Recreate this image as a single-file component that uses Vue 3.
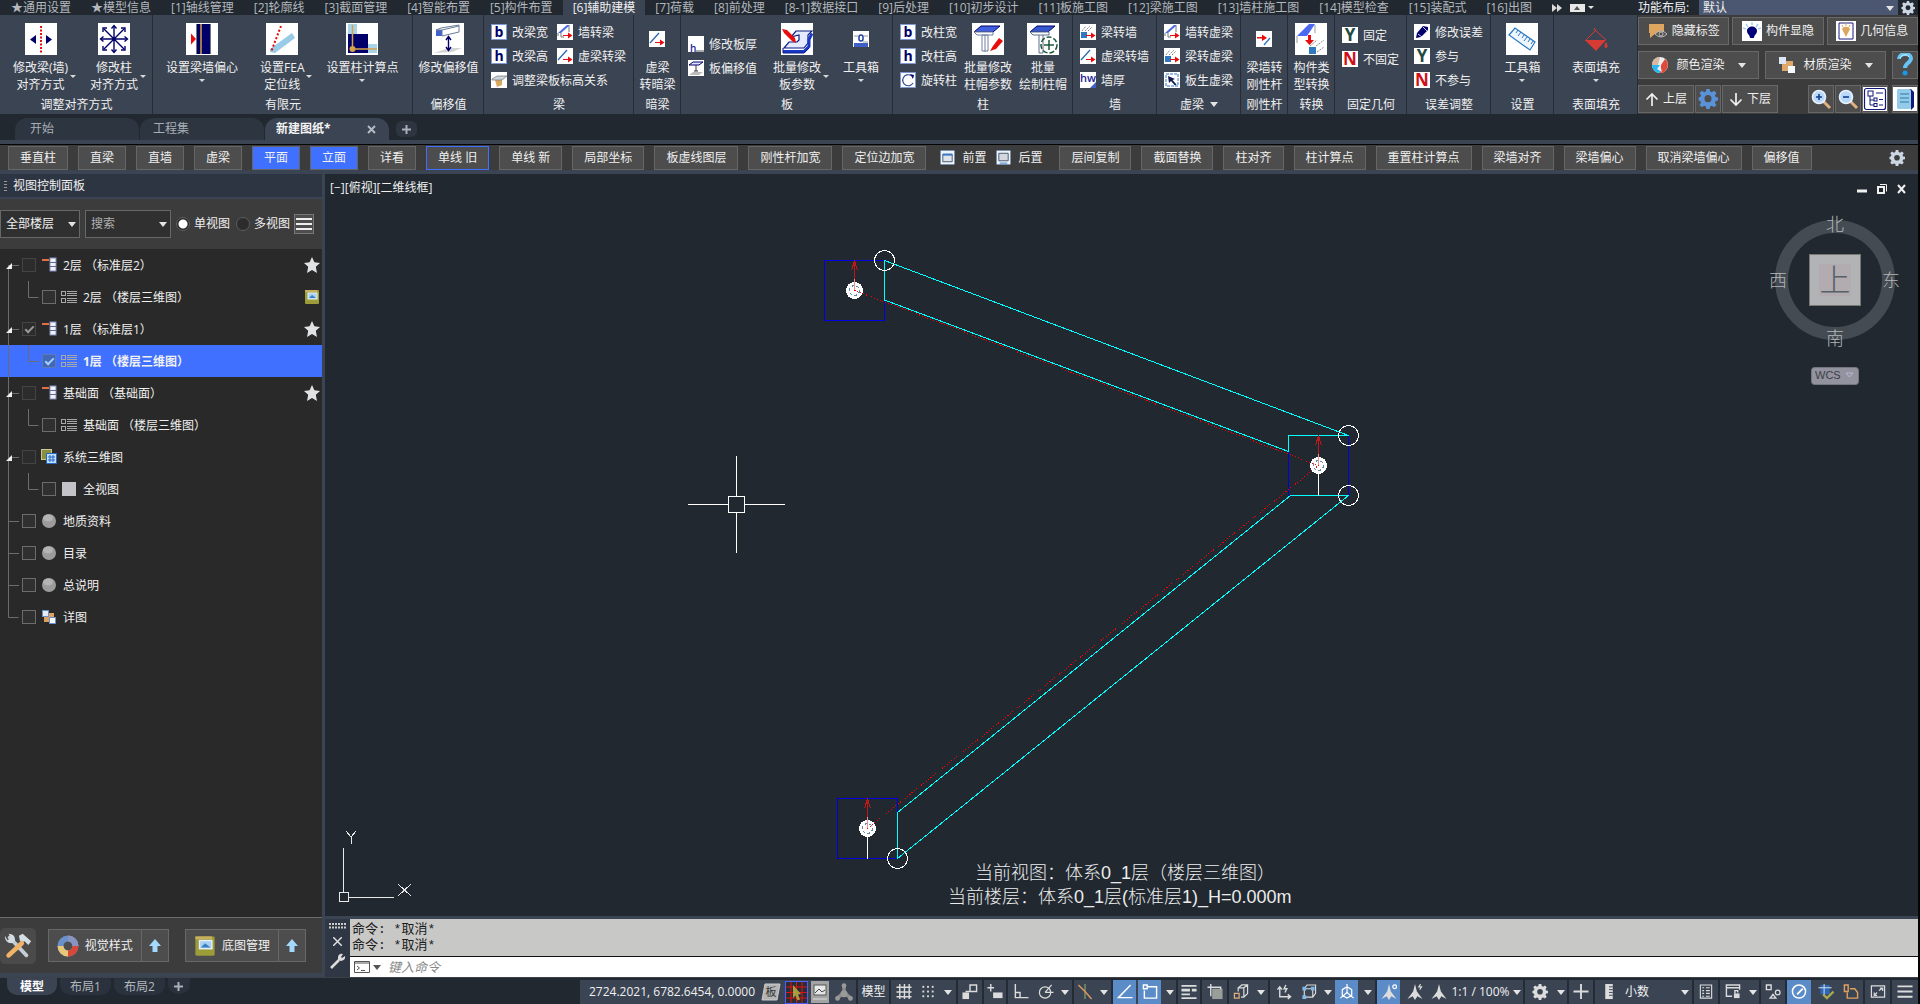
<script setup>
import { ref } from 'vue'

const ribbonTabs = [
  '★通用设置', '★模型信息', '[1]轴线管理', '[2]轮廓线', '[3]截面管理', '[4]智能布置', '[5]构件布置',
  '[6]辅助建模', '[7]荷载', '[8]前处理', '[8-1]数据接口', '[9]后处理', '[10]初步设计', '[11]板施工图',
  '[12]梁施工图', '[13]墙柱施工图', '[14]模型检查', '[15]装配式', '[16]出图'
]
const activeTab = ref(7)

const letter = (c, color, size = 15) =>
  `<rect width="16" height="16" fill="#fff"/><text x="8" y="14" text-anchor="middle" font-family="Open Sans, sans-serif" font-weight="700" font-size="${size}" fill="${color}">${c}</text>`
const framed = (c) =>
  `<rect x=".5" y=".5" width="15" height="15" fill="#fff" stroke="#7f9ad0"/><text x="8" y="13" text-anchor="middle" font-family="Open Sans, sans-serif" font-weight="700" font-size="14" fill="#00006a">${c}</text>`
const white16 = '<rect width="16" height="16" fill="#fff"/>'
const white32 = '<rect width="32" height="32" fill="#fff"/>'
const redArrow = '<path d="M6 11h5V8.500l4.500 3-4.500 3V12H6z" fill="#e80c0c"/>'
const gearPath = 'M6.600 0h2.800l.4 2.200 1.500.6 1.900-1.300 2 2-1.300 1.900.6 1.500 2.200.4v2.400l-2.200.5-.6 1.500 1.300 1.800-2 2-1.900-1.200-1.500.6-.4 2.100H6.600l-.4-2.100-1.500-.6-1.900 1.200-2-2 1.300-1.800-.6-1.500L0 9.700V7.300l1.500-.4.6-1.500L.8 3.500l2-2 1.900 1.300 1.500-.6zM8 5.200a3 3 0 1 0 0 6 3 3 0 0 0 0-6z'
const stroke = (d, c = '#dcdcdc', w = 1.5) => `<path d="${d}" fill="none" stroke="${c}" stroke-width="${w}"/>`
const person = '<path d="M8 0l2 8 6 8-5.500-3L8 17l-2.500-4L0 16l6-8z" fill="#dcdcdc"/>'

const icons = {
  alignBeam: white32 + '<path d="M16 3v27" stroke="#e80c0c" stroke-width="2" stroke-dasharray="2 1.500"/><path d="M11 12v9l-6-4.500zM21 12v9l6-4.500z" fill="#00006a"/>',
  alignCol: white32 + '<g stroke="#00006a" stroke-width="1.400" fill="none"><path d="M16 3v26M3 16h26M6 6l20 20M26 6L6 26"/><path d="M13.500 5.500L16 2.500l2.500 3M13.500 26.500l2.500 3 2.500-3M5.500 13.500L2.500 16l3 2.500M26.500 13.500l3 2.500-3 2.500M5 9V5h4M23 5h4v4M5 23v4h4M23 27h4v-4"/></g>',
  eccentric: white32 + '<path d="M10 1h15v30H10z" fill="#00006a"/><path d="M10.500 1v30M24.500 1v30" stroke="#777"/><path d="M15 1v30" stroke="#d8a048" stroke-width="1.500"/><path d="M5 10.500l5 5.500-5 5.500z" fill="#e80c0c"/>',
  fea: white32 + '<path d="M4 26L26 10l3 5L9 30l-5-1z" fill="#98cbe8"/><path d="M15 3L5 29" stroke="#e80c0c" stroke-width="2" stroke-dasharray="2 2"/>',
  calcPoint: white32 + '<path d="M2 1h9v10H2zM22 21h9v9h-9z" fill="#a8d4ea"/><path d="M2 11h20v19H2z" fill="#00006a"/><path d="M6.500 2v24H31" fill="none" stroke="#d8a048" stroke-width="1.500"/><circle cx="6.500" cy="26" r="3" fill="#d8a048"/>',
  offset: white32 + '<path d="M4 7h6v6H4z" fill="#4060d0"/><path d="M4 7l5-2 18-3v7l-17 4V7l17-4M10 7H4" fill="none" stroke="#6a7a98"/><path d="M2 30l15-5h13l-10 4z" fill="#d4d4d4"/><path d="M16.500 14v13M14 17l2.500-3.500L19 17M14 24l2.500 3.500L19 24" stroke="#00006a" fill="none" stroke-width="1.400"/>',
  b: framed('b'), h: framed('h'),
  wallBeam: white16 + '<path d="M1 9l9-8h3L4 9z" fill="#4a6ae0"/><path d="M1 9v3M4 9v4h3M12 2v6" stroke="#777" fill="none"/>' + redArrow,
  dashBeam: white16 + '<path d="M1 12L10 2" stroke="#2868b0" stroke-width="1.300"/>' + redArrow,
  slabLevel: white16 + '<path d="M4 8l7-2v7l-5 2z" fill="#d8a860"/><path d="M1 7l5-3h10l-5 4H1z" fill="#c8d4dc" stroke="#777" stroke-width=".7"/>',
  slabH: white16 + '<text x="2" y="16" font-family="Open Sans, sans-serif" font-weight="600" font-size="10" fill="#20209a">h</text><path d="M8 15h8" stroke="#555"/>',
  slabOff: white16 + '<path d="M1 5l4-3h10l-4 3z" fill="#dde5ff" stroke="#00006a"/><path d="M8 5v6M6 11h4" stroke="#333"/><path d="M1 15l4-3h10l-4 3z" fill="#bbb"/>',
  slabBatch: white32 + '<path d="M10 14L15 8h16l-4 4v8l-4 5H3l5-6h8l2-2v-5z" fill="#e4eaff" stroke="#0a1a80" stroke-width="1.200"/><path d="M2 28.500h21l5-5v-7l3-6" stroke="#1838c8" stroke-width="3" fill="none"/><path d="M2 25v5h21l5-5" stroke="#0a1a80" fill="none"/><path d="M1 6l2 4 8 8 4 2-1-5-8-8z" fill="#e80c0c"/>',
  slabTool: white16 + '<path d="M1 12h14v4H1z" fill="#4060c8"/><path d="M1 5h4M11 5h4M10 11h5" stroke="#999"/><rect x="6" y="4" width="4" height="6" rx="2" fill="none" stroke="#2040a0" stroke-width="1.500"/>',
  rotate: '<rect x=".5" y=".5" width="15" height="15" fill="#fff" stroke="#7f9ad0"/><path d="M11 3.500A5.500 5.500 0 1 0 13 11" fill="none" stroke="#334a90" stroke-width="1.200"/><path d="M10 2l4 1-1 4z" fill="#00006a"/>',
  capEdit: white32 + '<path d="M2 9l7-6h19l-7 6z" fill="#4060e0" stroke="#00006a"/><path d="M2 9h19v3H5zM10 12h6v16h-6zM13 12v17" fill="#fff" stroke="#7080a0"/><path d="M18 28l3-5 6-8 4 3-7 8z" fill="#e80c0c"/>',
  capDraw: white32 + '<path d="M3 9l7-6h18l-7 6z" fill="#3858d0" stroke="#00006a"/><path d="M3 9h19v3H6zM12 12v18h4V12" fill="#fff" stroke="#607090"/><circle cx="22" cy="22" r="8" fill="none" stroke="#1c5a38" stroke-width="1.500" stroke-dasharray="5 2"/><path d="M22 17v10M17 22h10" stroke="#1c5a38" stroke-width="1.500"/>',
  beamWall: white16 + '<path d="M1 8h6v6H1z" fill="#3078c0"/><path d="M2 7l4-5M5 7l5-5M8 7l4-4" stroke="#888" stroke-dasharray="2 1"/>' + redArrow,
  hw: white16 + '<text x="0" y="10" font-family="Open Sans, sans-serif" font-weight="600" font-size="11" fill="#20209a">hw</text><path d="M16 10v6h-6z" fill="#4060c8"/>',
  slabGen: white16 + '<path d="M2 2h12v12H2z" fill="none" stroke="#3078c0" stroke-dasharray="3 1"/><path d="M4 4l7 3-2.500 1 4 4.500-1.500 1-4-4.500L5 11z" fill="#111a50"/>',
  rigid: white16 + '<path d="M1 6h5V3.500L11 7l-5 3V7.500H1z" fill="#e80c0c"/><path d="M8 14l6-7" stroke="#3078c0" stroke-width="1.300"/>',
  convert: white32 + '<path d="M2 13L14 1h6l-8 12z" fill="#4a68f0"/><path d="M2 13v7M20 2v8" stroke="#999"/><path d="M13 12h3v5h3l-4.500 5L10 17h3z" fill="#e80c0c"/><path d="M14 24h7v7h-7z" fill="#3078c0"/><path d="M15 23l7-6M21 23l8-6M22 29l7-5" stroke="#888" stroke-dasharray="2 1"/>',
  Y: letter('Y', '#1f4a42', 17), N: letter('N', '#d01018', 17),
  pencil: white16 + '<path d="M2 14l1-5 6-7 5 1v3l-7 7z" fill="#00006a"/><path d="M4 10l4 3M9 3l4 4" stroke="#fff" stroke-width=".8"/>',
  ruler: white32 + '<path d="M3 12l6-7 20 14-5 8z" fill="#eef5fc" stroke="#2878c0" stroke-width="1.200"/><path d="M12 7l-2 3M15 9l-3 4M18 12l-2 3M21 14l-3 4M24 16l-2 3M27 18l-2 3" stroke="#2878c0"/>',
  bucket: '<path d="M5 17h21L16 28z" fill="#d83a34"/><path d="M14 6l12 11M16 7L5 18M14 5l2 3" stroke="#d83a34" stroke-width="1" fill="none"/><path d="M26 19c2 3 2 6 0 6s-2-3 0-6z" fill="#d83a34"/>',
  gear: `<path d="${gearPath}" fill="#ccd5e2" fill-rule="evenodd"/>`,
  gearBlue: `<path d="${gearPath}" fill="#5a92d8" fill-rule="evenodd"/>`,
  gearLight: `<path d="${gearPath}" fill="#dcdcdc" fill-rule="evenodd"/>`,
  tag: '<path d="M1 3h15v9H8l-6 5v-5H1z" fill="#dca660"/><path d="M7 13q6-6 12 0-6 6-12 0z" fill="#4d4d4d" stroke="#bbb"/><circle cx="13" cy="13" r="2" fill="none" stroke="#bbb"/>',
  bulb: '<rect width="20" height="20" fill="#fff"/><path d="M5 10c0-6 10-6 10 0 0 3-3 4-3 7H8c0-3-3-4-3-7z" fill="#000078"/><path d="M10 1v3M4 3l2 3M16 3l-2 3M1 7l3 1M19 7l-3 1" stroke="#a8d4ea" stroke-width="1.500"/>',
  geo: '<rect width="20" height="20" fill="#fff"/><path d="M3 2h14v16H3z" fill="none" stroke="#1a1a80"/><path d="M6 8c1-3 7-3 8 0l-4 8z" fill="#dca660"/><path d="M10 2v3M6 4l1 2M14 4l-1 2" stroke="#dca660"/>',
  colors: '<circle cx="9" cy="9" r="8" fill="#eee"/><path d="M9 1a8 8 0 0 0-8 8h6z" fill="#d8b8a0"/><path d="M1 9a8 8 0 0 0 8 8V9z" fill="#28b8f0"/><path d="M9 17a8 8 0 0 0 5-14l-4 6z" fill="#e04a38"/><path d="M9 9l-3 4 5 3z" fill="#e8f4ff"/>',
  material: '<rect x="4" y="5" width="11" height="10" fill="#e0a868"/><rect x="1" y="1" width="7" height="7" fill="#dce6f6"/><rect x="10" y="10" width="7" height="7" fill="#f4f8ff"/>',
  detail: '<rect x="3" y="4" width="10" height="9" fill="#dca060"/><rect x="1.500" y="1.500" width="6" height="6" fill="#e4ecfa" stroke="#6a90c8"/><rect x="8.500" y="8.500" width="6" height="6" fill="#f4f8ff" stroke="#6a90c8"/>',
  help: '<path d="M3 6c0-6 11-7 12-1 0 5-6 5-6 10" fill="none" stroke="#68c4f4" stroke-width="4"/><path d="M4 5c2-4 8-4 9-1" fill="none" stroke="#d8f0ff"/><circle cx="9" cy="20" r="2.500" fill="#1898e8"/>',
  up: stroke('M7 14V2M1.500 7.500L7 2l5.500 5.500', '#f0f0f0', 1.700),
  down: stroke('M7 1v12M1.500 7.500L7 13l5.500-5.500', '#f0f0f0', 1.700),
  zoomIn: '<path d="M12 12l7 7" stroke="#e0b080" stroke-width="3"/><circle cx="8" cy="8" r="6.500" fill="#b8daf8" stroke="#e8f2ff" stroke-width="1.600"/><path d="M8 5v6M5 8h6" stroke="#143c90" stroke-width="1.600"/>',
  zoomOut: '<path d="M12 12l7 7" stroke="#e0b080" stroke-width="3"/><circle cx="8" cy="8" r="6.500" fill="#b8daf8" stroke="#e8f2ff" stroke-width="1.600"/><path d="M5 8h6" stroke="#143c90" stroke-width="1.600"/>',
  treeBtn: '<rect width="24" height="24" fill="#fff"/><rect x="1.500" y="1.500" width="21" height="21" rx="2" fill="none" stroke="#101878" stroke-width="1.200"/><g fill="none" stroke="#101878"><rect x="5" y="4" width="5" height="5"/><path d="M7 9v9h4M7 13h4M13 6h7"/><rect x="11" y="11" width="3" height="3"/><rect x="11" y="16.500" width="3" height="3"/><path d="M16 12.500h4M16 18h4"/></g>',
  docBtn: '<rect width="24" height="24" fill="#fff"/><path d="M5 2h13l3 3v15l-3 3V4H5z" fill="#101878"/><rect x="4" y="2" width="14" height="20" rx="1.500" fill="#94cbe8"/><path d="M7 7h9M7 11h9M7 15h9" stroke="#3078a8"/>',
  win: '<rect x=".5" y=".5" width="15" height="15" rx="1" fill="#eef4fc" stroke="#7890b0"/><path d="M3 4.500h10v8H3z" fill="#e0e4ea" stroke="#456"/><path d="M3 5h10" stroke="#3a78c8" stroke-width="2"/>',
  winBack: '<rect x=".5" y=".5" width="15" height="15" rx="1" fill="#eef4fc" stroke="#7890b0"/><path d="M3 3.500h10v8H3z" fill="#d4d8de" stroke="#456"/><path d="M4 14h8" stroke="#3a78c8"/>',
  storey: '<path d="M1 3h7" stroke="#e07040" stroke-width="2"/><rect x="9" y="1" width="6" height="13" fill="#f0f2f8" stroke="#8490c0"/><path d="M9 5.500h6M9 9.500h6" stroke="#606890"/>',
  view: '<g fill="none" stroke="#a8a8a8"><rect x=".5" y="2.500" width="4" height="4"/><rect x=".5" y="9.500" width="4" height="4"/><path d="M6 2.500h10M6 4.500h10M6 6.500h10M6 9.500h10M6 11.500h10M6 13.500h10"/></g>',
  system: '<rect x=".5" y=".5" width="10" height="10" fill="#8a9040" stroke="#c8c890"/><rect x="5.500" y="4.500" width="10" height="10" fill="#bfe0fa" stroke="#2868c0"/><path d="M7 8h7M7 11h7M9 6v7M12 6v7" stroke="#2868c0"/>',
  square: '<rect x="1" y="1" width="14" height="14" fill="#c4c4c8"/>',
  ball: '<circle cx="8" cy="8" r="7" fill="#9c9c9c"/><ellipse cx="7" cy="5" rx="5" ry="3.500" fill="#b4b4b4"/>',
  star: '<path d="M8 0l2.400 5.300 5.600.6-4.200 3.900 1.200 6.200-5-3-5 3 1.200-6.200L0 5.900l5.600-.6z" fill="#e0e2e4"/>',
  album: '<rect x="1" y="1" width="14" height="14" rx="1" fill="#9c9c38"/><path d="M1 1h12v2H1z" fill="#c8b060"/><rect x="4" y="4" width="9" height="6" fill="#a8d0f4" stroke="#e8f0f8"/><path d="M5 9l3-3 4 3z" fill="#3a80c0"/>',
  tools: '<path d="M7 5L25 24" stroke="#c4ccd4" stroke-width="4" stroke-linecap="round"/><path d="M2 3q0 8 7 8l4-3Q13 1 6 1l2 4-3 3z" fill="#d4dce4"/><path d="M17 3l4-2 9 8-3 4-4-4-3 1-2-2z" fill="#d4dce4"/><path d="M20 11L6 24" stroke="#f0b468" stroke-width="5" stroke-linecap="round"/>',
  ring: '<g fill="none" stroke-width="6"><circle cx="11" cy="11" r="7.500" stroke="#6a90c8"/><path d="M11 18.500A7.500 7.500 0 0 0 18.500 11" stroke="#d84838"/><path d="M11 3.500A7.500 7.500 0 0 1 18.500 11" stroke="#8a94c0"/><path d="M3.500 11A7.500 7.500 0 0 0 11 18.500" stroke="#e8c878"/></g>',
  arrowUp: '<path d="M6 0l6 7H8.500v6h-5V7H0z" fill="#a4d8fc"/>',
  sPlate: '<path d="M4 1h15l-3 16H1z" fill="#b4b4b4" stroke="#ccc"/><text x="10" y="13" text-anchor="middle" font-size="11" font-family="Noto Sans CJK SC, sans-serif" fill="#333">板</text>',
  sCursor: '<rect x=".5" y=".5" width="22" height="22" fill="#2c2c34" stroke="#4a60ff"/><path d="M6 1v21M11.500 1v21M17 1v21M1 6h21M1 11.500h21M1 17h21" stroke="#e01010" stroke-width="1"/><path d="M8 4l8 9-3 .5 2 5-2.500 1-2-5L8 17z" fill="#a8a040"/>',
  sDoc: '<rect x="0" y="0" width="18" height="22" fill="#a4a4a4"/><rect x="3" y="4" width="12" height="10" fill="#e8e8e8" stroke="#555"/><path d="M4 12l4-4 3 3 3-2" stroke="#444" fill="none"/><path d="M2 18h14" stroke="#ddd"/>',
  sTri: '<path d="M8 3v6l-6 5M8 9l6 5" stroke="#8c8c8c" stroke-width="3" fill="none"/><circle cx="8" cy="3" r="2" fill="#9a9a9a"/><circle cx="8" cy="10" r="3" fill="#9a9a9a"/><circle cx="2.500" cy="14" r="2" fill="#9a9a9a"/><circle cx="13.500" cy="14" r="2" fill="#9a9a9a"/>',
  sGrid: stroke('M3.500 0v16M8.500 0v16M13.500 0v16M0 3.500h16M0 8.500h16M0 13.500h16'),
  sDots: '<g fill="#dcdcdc">' + [2, 7, 12].map(y => [2, 7, 12].map(x => `<rect x="${x}" y="${y}" width="2" height="2"/>`).join('')).join('') + '</g>',
  sSnap: '<path d="M0 9h7v7H0z" fill="#dcdcdc"/>' + stroke('M8 1h7v7H8zM4 9V8h4'),
  sDyn: stroke('M3.500 0v8M0 4h7') + '<path d="M6 9h10v6H6z" fill="#dcdcdc"/>',
  sOrtho: stroke('M2 0v14.500h14M2 9h5v5'),
  sPolar: '<circle cx="7" cy="9" r="6" fill="none" stroke="#dcdcdc" stroke-width="1.300"/>' + stroke('M7 9h9M7 9l7-8', '#dcdcdc', 1.3),
  sIso: stroke('M8 0v16', '#9cc070', 1) + stroke('M1 1l7 7 7 8', '#e09a60', 1.500),
  sOtrack: stroke('M14 1L1 14.500h15', '#fff'),
  sOsnap: stroke('M5 3h10v12H2V7', '#fff') + stroke('M1 1h4v4H1z', '#fff'),
  sLine: '<path d="M0 1h16v2H0zM0 5h9v3H0zM11 5h5v3h-5zM0 10h9v2H0zM0 14h16v2H0z" fill="#dcdcdc"/>',
  sTrans: '<path d="M5 5h11v11H5z" fill="#9a9e98"/>' + stroke('M3.500 0v13M0 3.500h14v2'),
  sCube: stroke('M5 8V4l4-3h6v9l-4 4H8M5 4h6v10M11 4l4-3', '#dcdcdc', 1.3) + stroke('M1 10h5v5H1z', '#e0b080', 1.3),
  sUcs: stroke('M3.500 4v9.500H14M1 6l2.500-3L6 6M12 11l3 2.500-3 2.500M10 1L8 5h3l-2 4'),
  sFilter: stroke('M3 5h9v9H3zM3 5l3-4h9v9l-3 4', '#dcdcdc', 1.200) + '<path d="M1 3h4v4H1zM10 3h4v4h-4zM1 12h4v4H1z" fill="#80b8e8"/>',
  sGizmo: stroke('M8 0v9M8 9l-7 6M8 9l7 6M3 6l5-3 5 3v6l-5 3-5-3z', '#fff', 1.300),
  sAnno: person + '<circle cx="14" cy="3" r="2" fill="none" stroke="#fff" stroke-width="1.300"/>',
  sAnno2: person + stroke('M14 0l-2 3h3l-2 3', '#dcdcdc', 1.200), sAnno3: person,
  sPlus: stroke('M8 0v16M0 8h16', '#dcdcdc', 2),
  sRule: '<path d="M4 0h8v16H4z" fill="#dcdcdc"/><path d="M8 3h4M8 6h4M8 9h4M8 12h4" stroke="#3b4453"/>',
  sProps: stroke('M2 1h12v14H2zM4 4h2M8 4h4M4 7h2M8 7h4M4 10h2M8 10h4M4 13h2M8 13h4', '#dcdcdc', 1.200),
  sLock: stroke('M15 6V1H1v12h6M1 4h14') + '<path d="M9 10h6v5H9z" fill="#dcdcdc"/>' + stroke('M10 10V7h3v2'),
  sShapes: stroke('M1 1h5v5H1zM8 11l3 4H5z') + '<circle cx="13" cy="9" r="2.500" fill="none" stroke="#dcdcdc" stroke-width="1.300"/>',
  sPerf: '<circle cx="8" cy="8" r="7" fill="none" stroke="#fff" stroke-width="1.600"/><path d="M6 11l6-6" stroke="#fff" stroke-width="2"/>',
  sStd: '<path d="M2 1h10v10H2z" fill="#3068b8"/><path d="M0 4h14M6 0v12" stroke="#d8e4f0"/><path d="M5 11l4 4 7-7" fill="none" stroke="#a8a850" stroke-width="2.500"/>',
  sClip: stroke('M7 5h5l3 4v6H4V9M1 1h4v7H1z', '#e0a060', 1.500),
  sFull: stroke('M1 2h14v12H1zM5 11l2-2M9 7l3-2M10 4.500h3v3M4 9v3h3', '#dcdcdc', 1.300),
  sMenu: stroke('M0 2.500h16M0 8h16M0 13.500h16', '#dcdcdc', 2)
}

const s = (icon, text) => ({ icon, text })
const groups = [
  { label: '调整对齐方式', w: 153, pad: 5, gap: 6, items: [
    { big: ['修改梁(墙)', '对齐方式'], icon: 'alignBeam', side: true },
    { big: ['修改柱', '对齐方式'], icon: 'alignCol', side: true }] },
  { label: '有限元', w: 260, pad: 13, gap: 14, items: [
    { big: ['设置梁墙偏心'], icon: 'eccentric', below: true },
    { big: ['设置FEA', '定位线'], icon: 'fea', side: true },
    { big: ['设置柱计算点'], icon: 'calcPoint', below: true }] },
  { label: '偏移值', w: 71, center: true, items: [{ big: ['修改偏移值'], icon: 'offset' }] },
  { label: '梁', w: 150, pad: 7, items: [{ two: true, stack: [s('b', '改梁宽'), s('wallBeam', '墙转梁'), s('h', '改梁高'), s('dashBeam', '虚梁转梁'), s('slabLevel', '调整梁板标高关系')] }] },
  { label: '暗梁', w: 47, center: true, items: [{ big: ['虚梁', '转暗梁'], icon: 'dashBeam', small: true }] },
  { label: '板', w: 212, pad: 7, gap: 8, items: [
    { low: true, stack: [s('slabH', '修改板厚'), s('slabOff', '板偏移值')] },
    { big: ['批量修改', '板参数'], icon: 'slabBatch', side: true },
    { big: ['工具箱'], icon: 'slabTool', small: true, below: true, roomy: true }] },
  { label: '柱', w: 180, pad: 7, gap: 7, items: [
    { stack: [s('b', '改柱宽'), s('h', '改柱高'), s('rotate', '旋转柱')] },
    { big: ['批量修改', '柱帽参数'], icon: 'capEdit' },
    { big: ['批量', '绘制柱帽'], icon: 'capDraw' }] },
  { label: '墙', w: 84, pad: 7, items: [{ stack: [s('beamWall', '梁转墙'), s('dashBeam', '虚梁转墙'), s('hw', '墙厚')] }] },
  { label: '虚梁', w: 84, pad: 7, more: true, items: [{ stack: [s('wallBeam', '墙转虚梁'), s('beamWall', '梁转虚梁'), s('slabGen', '板生虚梁')] }] },
  { label: '刚性杆', w: 47, center: true, items: [{ big: ['梁墙转', '刚性杆'], icon: 'rigid', small: true }] },
  { label: '转换', w: 47, center: true, items: [{ big: ['构件类', '型转换'], icon: 'convert' }] },
  { label: '固定几何', w: 72, pad: 7, items: [{ mid: true, stack: [s('Y', '固定'), s('N', '不固定')] }] },
  { label: '误差调整', w: 84, pad: 7, items: [{ stack: [s('pencil', '修改误差'), s('Y', '参与'), s('N', '不参与')] }] },
  { label: '设置', w: 63, center: true, items: [{ big: ['工具箱'], icon: 'ruler', below: true }] },
  { label: '表面填充', w: 84, center: true, items: [{ big: ['表面填充'], icon: 'bucket', below: true }] }
]

const toolbar = [
  { t: '垂直柱' }, { t: '直梁' }, { t: '直墙' }, { t: '虚梁' }, { t: '平面', on: true }, { t: '立面', on: true },
  { t: '详看' }, { t: '单线 旧', ring: true }, { t: '单线 新' }, { t: '局部坐标' }, { t: '板虚线图层' }, { t: '刚性杆加宽' },
  { t: '定位边加宽' }, { t: '前置', icon: 'win' }, { t: '后置', icon: 'winBack' }, { t: '层间复制' }, { t: '截面替换' },
  { t: '柱对齐' }, { t: '柱计算点' }, { t: '重置柱计算点' }, { t: '梁墙对齐' }, { t: '梁墙偏心' }, { t: '取消梁墙偏心' }, { t: '偏移值' }
]

const tree = ref([
  { t: '2层 （标准层2）', icon: 'storey', open: true, dim: true, mark: 'star', lines: 'M8.5 16v16M9 16.5h10' },
  { t: '2层 （楼层三维图）', icon: 'view', child: true, mark: 'album' },
  { t: '1层 （标准层1）', icon: 'storey', open: true, dim: true, checked: true, mark: 'star' },
  { t: '1层 （楼层三维图）', icon: 'view', child: true, checked: true, selected: true },
  { t: '基础面 （基础面）', icon: 'storey', open: true, dim: true, mark: 'star' },
  { t: '基础面 （楼层三维图）', icon: 'view', child: true },
  { t: '系统三维图', icon: 'system', open: true, dim: true },
  { t: '全视图', icon: 'square', child: true },
  { t: '地质资料', icon: 'ball' },
  { t: '目录', icon: 'ball' },
  { t: '总说明', icon: 'ball' },
  { t: '详图', icon: 'detail', lines: 'M8.5 0v16.5h10' }
])
const linesOf = r => r.lines || (r.child ? 'M8.5 0v32M28.5 0v16.5h10' : 'M8.5 0v32M9 16.5h10')

const c = (icon, w, o = {}) => ({ icon, w, ...o })
const caret = (w, sep = true) => ({ caret: true, w, sep })
const status = [
  { text: '2724.2021, 6782.6454, 0.0000', w: 178, coords: true },
  c('sPlate', 26, { size: 20 }), c('sCursor', 24, { size: 23 }), c('sDoc', 23, { size: 22 }), c('sTri', 27, { size: 20, sep: true }),
  { text: '模型', w: 33, sep: true }, c('sGrid', 25), c('sDots', 24), caret(18),
  c('sSnap', 26, { sep: true }), c('sDyn', 24, { sep: true }), c('sOrtho', 25), c('sPolar', 25), caret(16),
  c('sIso', 22), caret(17), c('sOtrack', 25, { on: true }), c('sOsnap', 25, { on: true }), caret(15),
  c('sLine', 24, { sep: true }), c('sTrans', 27, { sep: true }), c('sCube', 24), caret(17),
  c('sUcs', 27), c('sFilter', 23), caret(15, false), c('sGizmo', 25, { on: true }), caret(17),
  c('sAnno', 25, { on: true }), c('sAnno2', 25), c('sAnno3', 24), { text: '1:1 / 100%', w: 59 }, caret(15),
  c('gearLight', 29), caret(15), c('sPlus', 26, { sep: true }), c('sRule', 27), { text: '小数', w: 56, left: true }, caret(16),
  c('sProps', 26, { sep: true }), c('sLock', 26), caret(15), c('sShapes', 26, { sep: true }), c('sPerf', 26, { on: true, sep: true }),
  c('sStd', 26), c('sClip', 26, { sep: true }), c('sFull', 27, { sep: true }), c('sMenu', 26)
]
const viewMode = ref('single')
const nodes = [[854.5, 290.5, false], [1318.5, 465.5, true], [867.5, 828.5, true]]
const joints = [[884.5, 260.5], [1348.5, 435.5], [1348.5, 495.5], [897.5, 858.5]]
</script>

<template>
  <div class="app">
    <header class="head">
      <div class="ribbon-side">
        <nav class="tabs">
          <button v-for="(t, i) in ribbonTabs" :key="t" :class="['tab', { active: i === activeTab }]" @click="activeTab = i">{{ t }}</button>
          <svg class="ff" width="10" height="8" viewBox="0 0 10 8"><path d="M0 0l5 4-5 4zM5 0l5 4-5 4z" fill="#dcdcdc" /></svg>
          <button class="collapse" aria-label="折叠"><svg width="6" height="4"><path d="M0 4l3-4 3 4z" fill="#555" /></svg></button>
          <span class="caret"></span>
        </nav>
        <div class="ribbon">
          <section v-for="g in groups" :key="g.label" class="group" :style="{ flexGrow: g.w }">
            <div :class="['group-body', { centered: g.center }]" :style="{ paddingLeft: (g.pad || 0) + 'px', gap: (g.gap || 0) + 'px' }">
              <template v-for="(it, k) in g.items" :key="k">
                <button v-if="it.big" :class="['big', { side: it.side, roomy: it.roomy }]">
                  <span class="pic"><svg v-if="it.small" width="16" height="16" viewBox="0 0 16 16" v-html="icons[it.icon]"></svg><svg v-else width="32" height="32" viewBox="0 0 32 32" v-html="icons[it.icon]"></svg></span>
                  <span class="words"><span v-for="l in it.big" :key="l">{{ l }}</span><i v-if="it.below" class="mini"></i></span>
                  <i v-if="it.side" class="mini"></i>
                </button>
                <div v-else :class="['stack', { two: it.two, low: it.low, mid: it.mid }]">
                  <button v-for="b in it.stack" :key="b.text" class="small">
                    <svg width="16" height="16" viewBox="0 0 16 16" v-html="icons[b.icon]"></svg><span>{{ b.text }}</span>
                  </button>
                </div>
              </template>
            </div>
            <div class="group-label">{{ g.label }}<span v-if="g.more" class="caret"></span></div>
          </section>
        </div>
      </div>

      <aside class="quick">
        <div class="layout-row">
          <label for="layout">功能布局:</label>
          <span class="picker"><select id="layout"><option>默认</option></select><span class="caret"></span></span>
          <button class="bare" aria-label="设置"><svg width="14" height="14" viewBox="0 0 16 17" v-html="icons.gear"></svg></button>
        </div>
        <div class="quick-grid">
          <div class="qrow even">
            <button class="q"><svg width="20" height="20" viewBox="0 0 20 20" v-html="icons.tag"></svg>隐藏标签</button>
            <button class="q"><svg width="20" height="20" viewBox="0 0 20 20" v-html="icons.bulb"></svg>构件显隐</button>
            <button class="q"><svg width="20" height="20" viewBox="0 0 20 20" v-html="icons.geo"></svg>几何信息</button>
          </div>
          <div class="qrow wide">
            <button class="q grow"><svg width="18" height="18" viewBox="0 0 18 18" v-html="icons.colors"></svg>颜色渲染<span class="caret"></span></button>
            <button class="q grow"><svg width="18" height="18" viewBox="0 0 18 18" v-html="icons.material"></svg>材质渲染<span class="caret"></span></button>
            <button class="q ic" aria-label="帮助"><svg width="18" height="24" viewBox="0 0 18 24" v-html="icons.help"></svg></button>
          </div>
          <div class="qrow tight">
            <button class="q lv"><svg width="14" height="15" viewBox="0 0 14 15" v-html="icons.up"></svg>上层</button>
            <button class="q ic" aria-label="楼层设置"><svg width="20" height="20" viewBox="0 0 16 17" v-html="icons.gearBlue"></svg></button>
            <button class="q lv"><svg width="14" height="15" viewBox="0 0 14 15" v-html="icons.down"></svg>下层</button>
            <span class="spring"></span>
            <button class="q ic" aria-label="放大"><svg width="21" height="21" viewBox="0 0 21 21" v-html="icons.zoomIn"></svg></button>
            <button class="q ic" aria-label="缩小"><svg width="21" height="21" viewBox="0 0 21 21" v-html="icons.zoomOut"></svg></button>
            <button class="q ic" aria-label="结构"><svg width="24" height="24" viewBox="0 0 24 24" v-html="icons.treeBtn"></svg></button>
            <button class="q ic last" aria-label="文档"><svg width="24" height="24" viewBox="0 0 24 24" v-html="icons.docBtn"></svg></button>
          </div>
        </div>
      </aside>
    </header>

    <nav class="files">
      <button class="file first">开始</button>
      <button class="file">工程集</button>
      <button class="file current">新建图纸*<svg width="9" height="9" viewBox="0 0 9 9"><path d="M1 1l7 7M8 1L1 8" stroke="#b4bac4" stroke-width="2" /></svg></button>
      <button class="file add" aria-label="新建"><svg width="9" height="9" viewBox="0 0 9 9"><path d="M4.5 0v9M0 4.500h9" stroke="#aab0ba" stroke-width="2" /></svg></button>
    </nav>

    <div class="toolbar">
      <template v-for="b in toolbar" :key="b.t">
        <button v-if="b.icon" class="flat"><svg width="15" height="15" viewBox="0 0 16 16" v-html="icons[b.icon]"></svg>{{ b.t }}</button>
        <button v-else :class="['tb', { on: b.on, ring: b.ring }]">{{ b.t }}</button>
      </template>
      <span class="spring"></span>
      <button class="bare" aria-label="工具栏设置"><svg width="16" height="16" viewBox="0 0 16 17" v-html="icons.gear"></svg></button>
    </div>

    <div class="main">
      <aside class="panel">
        <div class="panel-title"><i class="grip"></i>视图控制面板</div>
        <div class="filters">
          <span class="picker box storey"><select aria-label="楼层"><option>全部楼层</option></select><span class="caret"></span></span>
          <span class="picker box find"><select aria-label="搜索"><option>搜索</option></select><span class="caret"></span></span>
          <label class="radio"><input v-model="viewMode" type="radio" value="single">单视图</label>
          <label class="radio"><input v-model="viewMode" type="radio" value="multi">多视图</label>
          <button class="menu" aria-label="菜单"><svg width="16" height="12"><path d="M0 1h16M0 6h16M0 11h16" stroke="#eee" stroke-width="2" /></svg></button>
        </div>
        <div class="tree">
          <div v-for="(r, i) in tree" :key="i" :class="['row', { selected: r.selected }]">
            <svg class="gutter" :width="r.child ? 42 : 22" height="32">
              <path :d="linesOf(r)" fill="none" stroke="#6c6c6c" />
              <path v-if="r.open" d="M12 14v6H6z" fill="#f0f0f0" />
            </svg>
            <input :id="'node' + i" v-model="r.checked" type="checkbox" :class="{ dim: r.dim }">
            <svg width="16" height="16" viewBox="0 0 16 16" v-html="icons[r.icon]"></svg>
            <label :for="'node' + i">{{ r.t }}</label>
            <svg v-if="r.mark" class="mark" width="16" height="16" viewBox="0 0 16 16" v-html="icons[r.mark]"></svg>
          </div>
        </div>
        <div class="panel-foot">
          <button class="kit" aria-label="工具"><svg width="30" height="28" viewBox="0 0 32 28" v-html="icons.tools"></svg></button>
          <div class="split">
            <button><svg width="22" height="22" viewBox="0 0 22 22" v-html="icons.ring"></svg>视觉样式</button>
            <button class="pop" aria-label="展开视觉样式"><svg width="12" height="13" v-html="icons.arrowUp"></svg></button>
          </div>
          <div class="split">
            <button><svg width="22" height="22" viewBox="0 0 16 16" v-html="icons.album"></svg>底图管理</button>
            <button class="pop" aria-label="展开底图管理"><svg width="12" height="13" v-html="icons.arrowUp"></svg></button>
          </div>
        </div>
      </aside>

      <div class="work">
        <div class="canvas">
          <svg class="drawing" viewBox="325 174 1593 742" shape-rendering="crispEdges">
            <g fill="none" stroke="#0000e0">
              <path d="M884.5 260.500h-60v60h60V300M1288.500 451v44.500M1348.500 435.500v60M897.500 798.500h-60v60h60M897.500 798.500V812" />
            </g>
            <g fill="none" stroke="#00ffff">
              <path d="M884.500 300V260.500L1348.500 435.500h-60V451.500L884.500 300" />
              <path d="M1348.500 495.500h-58L897.500 812.500v46L1348.500 495.500" />
            </g>
            <g v-for="(n, i) in nodes" :key="i">
              <path v-if="n[2]" :d="`M${n[0]} ${n[1]}v30`" stroke="#fff" />
              <circle :cx="n[0]" :cy="n[1]" r="8.500" fill="#fff" />
              <circle :cx="n[0]" :cy="n[1]" r="5" fill="none" stroke="#6a88a8" stroke-dasharray="3 2" />
              <path :d="`M${n[0]} ${n[1]}v-19`" stroke="#e89888" />
              <path :d="`M${n[0]} ${n[1] - 12}v-18l-3 10m3 -10l3 10`" stroke="#c01818" fill="none" />
            </g>
            <path d="M854.500 290.500L1318.500 465.500L867.500 828.500" fill="none" stroke="#ff0000" stroke-dasharray="1 2" />
            <circle v-for="(j, i) in joints" :key="'j' + i" :cx="j[0]" :cy="j[1]" r="10" fill="none" stroke="#fff" />
            <path d="M688 504.500h40.500M744.500 504.500H785M736.500 456v40.500M736.500 512.500V553M728.500 496.500h16v16h-16z" fill="none" stroke="#fff" />
            <path d="M339.500 892.500h9v9h-9zM343.500 892V848M349 897.500h45M346 831l5 6 5-6M351.500 837v7M398 884l13 12M411 884l-13 12" fill="none" stroke="#e8e8e8" />
            <g fill="#ececec" font-size="18" font-weight="300" font-family="Liberation Sans, Noto Sans CJK SC, sans-serif">
              <text x="975" y="879">当前视图：体系0_1层（楼层三维图）</text>
              <text x="948" y="903">当前楼层：体系0_1层(标准层1)_H=0.000m</text>
            </g>
            <g shape-rendering="auto">
              <circle cx="1835" cy="280" r="53.500" fill="none" stroke="#444b53" stroke-width="13" />
              <rect x="1809.500" y="254.500" width="51" height="51" fill="#b2b3b5" stroke="#777" />
              <rect x="1819" y="264" width="32" height="32" fill="#b2abb0" />
              <g text-anchor="middle" font-family="Noto Sans CJK SC, sans-serif" font-weight="300" font-size="18" fill="#b4b6b8">
                <text x="1835" y="231">北</text><text x="1835" y="345">南</text><text x="1778" y="287">西</text><text x="1891" y="287">东</text>
                <text x="1835" y="291" font-size="31" fill="#566068">上</text>
              </g>
              <rect x="1811.500" y="367.500" width="47" height="17" rx="3" fill="#92939e" stroke="#75767f" />
              <text x="1815" y="379" font-family="Liberation Sans, sans-serif" font-size="11" fill="#3c4048">WCS</text>
              <path d="M1846 373h7l-3.500 4z" fill="none" stroke="#b8b8d8" />
              <g stroke="#f0f0f0" fill="none"><path d="M1857 191h10" stroke-width="3" /><path d="M1878 187h6v6h-6z" stroke-width="2" /><path d="M1880 184.500h6.500v7" stroke-width="1" /><path d="M1898 185l7 8M1905 185l-7 8" stroke-width="2" /></g>
            </g>
          </svg>
          <div class="view-label">[−][俯视][二维线框]</div>
        </div>
        <div class="command">
          <div class="handle">
            <svg width="18" height="6"><path d="M0 1h18M0 4.500h18" stroke="#ccc" stroke-width="2" stroke-dasharray="2 1" /></svg>
            <svg width="9" height="9"><path d="M0 0l9 9M9 0L0 9" stroke="#ddd" stroke-width="1.500" /></svg>
            <svg width="16" height="16" viewBox="0 0 16 16"><path d="M1 15l8-8" stroke="#ddd" stroke-width="2.500" /><path d="M8 4q1-4 5-3l-2 3 1 1 3-2q1 4-4 5l-3-1z" fill="#ddd" /></svg>
          </div>
          <div class="console">
            <div class="log"><p>命令: *取消*</p><p>命令: *取消*</p></div>
            <div class="prompt">
              <svg width="16" height="12"><path d="M.5.5h15v11H.5zM0 2h16M3 5l2.500 2L3 9M7 9.500h4" fill="none" stroke="#555" /></svg>
              <span class="caret dark"></span>
              <input type="text" placeholder="键入命令" aria-label="命令">
            </div>
          </div>
        </div>
      </div>
    </div>

    <footer class="foot">
      <nav class="sheets">
        <button class="sheet current">模型</button>
        <button class="sheet">布局1</button>
        <button class="sheet">布局2</button>
        <button class="sheet plus" aria-label="新建布局"><svg width="9" height="9" viewBox="0 0 9 9"><path d="M4.500 0v9M0 4.500h9" stroke="#aab0ba" stroke-width="2" /></svg></button>
      </nav>
      <div class="status">
        <button v-for="(x, i) in status" :key="i" :class="['cell', { on: x.on, sep: x.sep, left: x.left, coords: x.coords }]" :style="{ width: x.w + 'px' }">
          <span v-if="x.caret" class="caret"></span>
          <template v-else-if="x.text">{{ x.text }}</template>
          <svg v-else :width="x.size || 16" :height="x.size || 16" :viewBox="x.size > 20 ? (x.icon === 'sDoc' ? '-2 0 22 22' : '0 0 23 23') : x.icon === 'sPlate' ? '0 -1 20 20' : '0 0 16 17'" v-html="icons[x.icon]"></svg>
        </button>
      </div>
    </footer>
  </div>
</template>

<style>
body { margin: 0; background: #212830; }
</style>

<style scoped>
.app {
  min-height: 100vh; box-sizing: border-box; border-right: 2px solid #040507; display: flex; flex-direction: column;
  background: #212830; color: #f0f0f0; font: 12px/16px "Open Sans", "Noto Sans CJK SC", sans-serif; overflow: hidden;
}
button { margin: 0; padding: 0; border: 0; background: none; color: inherit; font: inherit; white-space: nowrap; }
svg { display: block; flex: none; }
p { margin: 0; }
.spring { flex: 1; }
.caret { flex: none; width: 0; height: 0; border: 4px solid transparent; border-top: 5px solid #e4e4e4; border-bottom: 0; }
.caret.dark { border-top-color: #555; }
.mini { width: 0; height: 0; border: 3px solid transparent; border-top: 3px solid #d8d8d8; border-bottom: 0; }
.bare { display: flex; align-items: center; justify-content: center; }

.head { display: flex; height: 114px; }
.ribbon-side { flex: 1; min-width: 0; display: flex; flex-direction: column; }
.tabs { height: 15px; padding-left: 1px; display: flex; align-items: center; }
.tab { height: 15px; padding: 0 10px; line-height: 14px; color: #b4b8be; }
.tab.active { background: #3b4453; color: #f0f0f0; }
.ff { margin: 0 8px 0 10px; }
.collapse { width: 15px; height: 8px; background: #e8e8e8; display: flex; align-items: center; justify-content: center; margin-right: 3px; }
.tabs .caret { border-width: 3px; border-bottom: 0; }
.ribbon { flex: 1; display: flex; background: #3b4453; }
.group { flex: 1 1 0; min-width: 0; display: flex; flex-direction: column; box-shadow: inset -1px 0 #252c36; }
.group-body { height: 80px; box-sizing: border-box; padding-top: 8px; display: flex; align-items: flex-start; }
.group-body.centered { justify-content: center; }
.group-label { display: flex; align-items: center; justify-content: center; gap: 6px; height: 19px; }
.big { display: grid; justify-items: center; row-gap: 4px; }
.big.side { grid-template-columns: 8px auto 8px; }
.big.side .pic, .big.side .words { grid-column: 2; }
.big.side .mini { grid-column: 3; grid-row: 2; align-self: center; justify-self: end; }
.big.roomy { padding: 0 6px; }
.pic { width: 32px; height: 32px; display: flex; align-items: center; justify-content: center; }
.words { display: flex; flex-direction: column; align-items: center; line-height: 17px; }
.words .mini { margin-top: 3px; }
.stack { display: grid; grid-auto-rows: 24px; margin-top: -3px; }
.stack.two { grid-template-columns: auto auto; column-gap: 9px; justify-items: start; }
.stack.two .small:last-child { grid-column: 1 / 3; }
.stack.low { margin-top: 9px; }
.stack.mid { margin-top: 0; }
.small { display: flex; align-items: center; gap: 5px; }
.small span { padding-top: 2px; }

.quick { width: 280px; display: flex; flex-direction: column; }
.layout-row { height: 15px; display: flex; align-items: center; line-height: 14px; }
.layout-row label { width: 61px; }
.picker { position: relative; display: flex; }
.picker select { appearance: none; width: 100%; border: 0; border-radius: 0; color: #f0f0f0; font: inherit; padding: 0 4px; outline: 0; }
.picker .caret { position: absolute; right: 4px; top: 50%; margin-top: -2px; pointer-events: none; }
.layout-row .picker { flex: 1; height: 15px; }
.layout-row select { background: #4b5670; line-height: 14px; height: 15px; }
.layout-row .bare { width: 20px; }
.quick-grid { flex: 1; display: flex; flex-direction: column; gap: 6px; padding-top: 2px; background: #3c3c3c; }
.qrow { display: flex; height: 28px; }
.even { gap: 3px; }
.even .q { flex: 1; }
.wide { gap: 6px; }
.tight { gap: 1px; }
.q { box-sizing: border-box; height: 28px; border: 1px solid #686868; background: #4d4d4d; display: flex; align-items: center; justify-content: center; gap: 4px; }
.q.grow { flex: 1; gap: 7px; }
.q.grow .caret { margin-left: 6px; }
.q.ic { width: 26px; }
.q.lv { width: 56px; }
.q.last { margin-left: 3px; }

.files { height: 26px; display: flex; align-items: flex-end; padding-left: 15px; gap: 1px; }
.file { height: 22px; width: 124px; box-sizing: border-box; padding: 0 13px; text-align: left; color: #a8aeb6; background: #2d3540; border-radius: 12px 12px 0 0; }
.file.first { padding-left: 15px; }
.file.current { background: #3b4453; color: #f4f4f4; font-weight: 700; display: flex; align-items: center; justify-content: space-between; padding: 0 13px 0 11px; }
.file.add { width: 21px; height: 16px; margin: 0 0 3px 6px; border-radius: 6px; padding: 0; display: flex; align-items: center; justify-content: center; }

.toolbar { display: flex; align-items: center; gap: 10px; height: 25px; padding: 0 13px 0 8px; background: #3c3c3c; border-top: 1px solid #050505; border-bottom: 4px solid #3b4453; box-shadow: 0 -4px 0 #3b4453; margin-top: 4px; }
.tb { height: 24px; box-sizing: border-box; padding: 0 11px; border: 1px solid #666; background: #4d4d4d; }
.tb.on { background: #4070ff; }
.tb.ring { border-color: #4070ff; }
.flat { display: flex; align-items: center; gap: 7px; padding-left: 4px; }
.flat + .flat { padding: 0 7px 0 0; }

.main { flex: 1; display: flex; min-height: 0; }
.panel { width: 322px; display: flex; flex-direction: column; border-right: 3px solid #3b4453; border-bottom: 4px solid #3b4453; background: #3c3c3c; }
.panel-title { height: 23px; border-bottom: 2px solid #3b4453; display: flex; align-items: center; gap: 6px; padding-left: 4px; background: #2d3442; }
.grip { width: 3px; height: 10px; background: repeating-linear-gradient(#999 0 1px, transparent 1px 3px); }
.filters { height: 50px; box-sizing: border-box; display: flex; align-items: center; }
.box select { height: 28px; box-sizing: border-box; background: #303030; border: 1px solid #686868; padding-left: 5px; }
.storey { width: 80px; margin-right: 5px; }
.find { width: 86px; margin-right: 5px; }
.find select { color: #b0b0b0; }
.radio { display: flex; align-items: center; gap: 4px; margin-right: 6px; }
.radio input { appearance: none; width: 14px; height: 14px; margin: 0; box-sizing: border-box; border: 1px solid #5c5c5c; border-radius: 50%; background: #2c2c2c; }
.radio input:checked { background: radial-gradient(#fff 0 4px, #2c2c2c 5px); }
.menu { width: 20px; height: 20px; box-sizing: border-box; border: 1px solid #777; background: #4d4d4d; display: flex; align-items: center; justify-content: center; margin-left: -2px; }
.tree { flex: 1; background: #292929; border-bottom: 1px solid #6c6c6c; }
.row { height: 32px; display: flex; align-items: center; gap: 5px; padding-right: 2px; }
.row.selected { background: #4070ff; font-weight: 700; }
.gutter { margin-right: -5px; }
.row input { appearance: none; flex: none; width: 14px; height: 14px; margin: 0; box-sizing: border-box; border: 1px solid #6c6c6c; background: #303030; display: flex; align-items: center; justify-content: center; }
.row input.dim { border-color: #444; background: #2c2c2c; }
.row input:checked::after { content: ""; width: 7px; height: 3px; border: solid #999; border-width: 0 0 2px 2px; rotate: -45deg; translate: 0 -1px; }
.row.selected input { background: #4468b8; border-color: #5a78c0; }
.row.selected input:checked::after { border-color: #a0d0ff; }
.row label { padding: 2px 0 0 1px; flex: 1; }
.panel-foot { height: 55px; display: flex; align-items: center; }
.kit { width: 36px; height: 36px; background: #4a4a4a; border-radius: 5px; display: flex; align-items: center; justify-content: center; margin-right: 12px; }
.split { display: flex; height: 33px; box-sizing: border-box; border: 1px solid #686868; background: #4d4d4d; margin-right: 16px; width: 122px; }
.split button { flex: 1; display: flex; align-items: center; justify-content: center; gap: 6px; }
.split .pop { flex: 0 0 27px; border-left: 1px solid #686868; }

.work { flex: 1; min-width: 0; display: flex; flex-direction: column; }
.canvas { flex: 1; position: relative; overflow: hidden; }
.drawing { position: absolute; inset: 0; width: 100%; height: 100%; }
.view-label { padding: 6px 5px; }
.command { display: flex; height: 58px; border-top: 3px solid #3b4453; background: #2f3744; }
.handle { width: 25px; display: flex; flex-direction: column; align-items: center; justify-content: space-between; padding: 4px 0 8px; box-sizing: border-box; }
.console { flex: 1; display: flex; flex-direction: column; background: #fff; color: #1c1c1c; font: 13px/16px "Liberation Mono", "Noto Sans CJK SC", monospace; }
.log { flex: 1; background: #c8c8c6; padding: 3px 2px 0; border-bottom: 1px solid #111; }
.prompt { height: 20px; display: flex; align-items: center; gap: 3px; padding-left: 4px; }
.prompt input { flex: 1; border: 0; outline: 0; padding: 0 4px; font: italic 13px/16px "Noto Sans CJK SC", sans-serif; background: none; }
.prompt input::placeholder { color: #888; opacity: 1; }

.foot { height: 26px; border-top: 1px solid #3c4048; display: flex; justify-content: space-between; }
.sheets { display: flex; align-items: flex-start; padding-left: 7px; gap: 3px; }
.sheet { height: 17px; line-height: 18px; padding: 0 10px; min-width: 50px; background: #2a323d; color: #b4b8be; border-radius: 0 0 10px 10px; }
.sheet.current { background: #3b4453; color: #fff; font-weight: 700; }
.sheet.plus { min-width: 22px; height: 16px; padding: 0 6px; }
.status { display: flex; padding-top: 2px; overflow: hidden; }
.cell { box-sizing: border-box; flex: none; display: flex; align-items: center; justify-content: center; background: #3b4453; }
.cell.sep { border-right: 2px solid #242b34; }
.cell.on { background: #5b8cc8; border-right: 2px solid #3b4453; }
.cell.left { justify-content: flex-start; padding-left: 3px; }
.cell.coords { justify-content: flex-end; padding-right: 3px; }
</style>
